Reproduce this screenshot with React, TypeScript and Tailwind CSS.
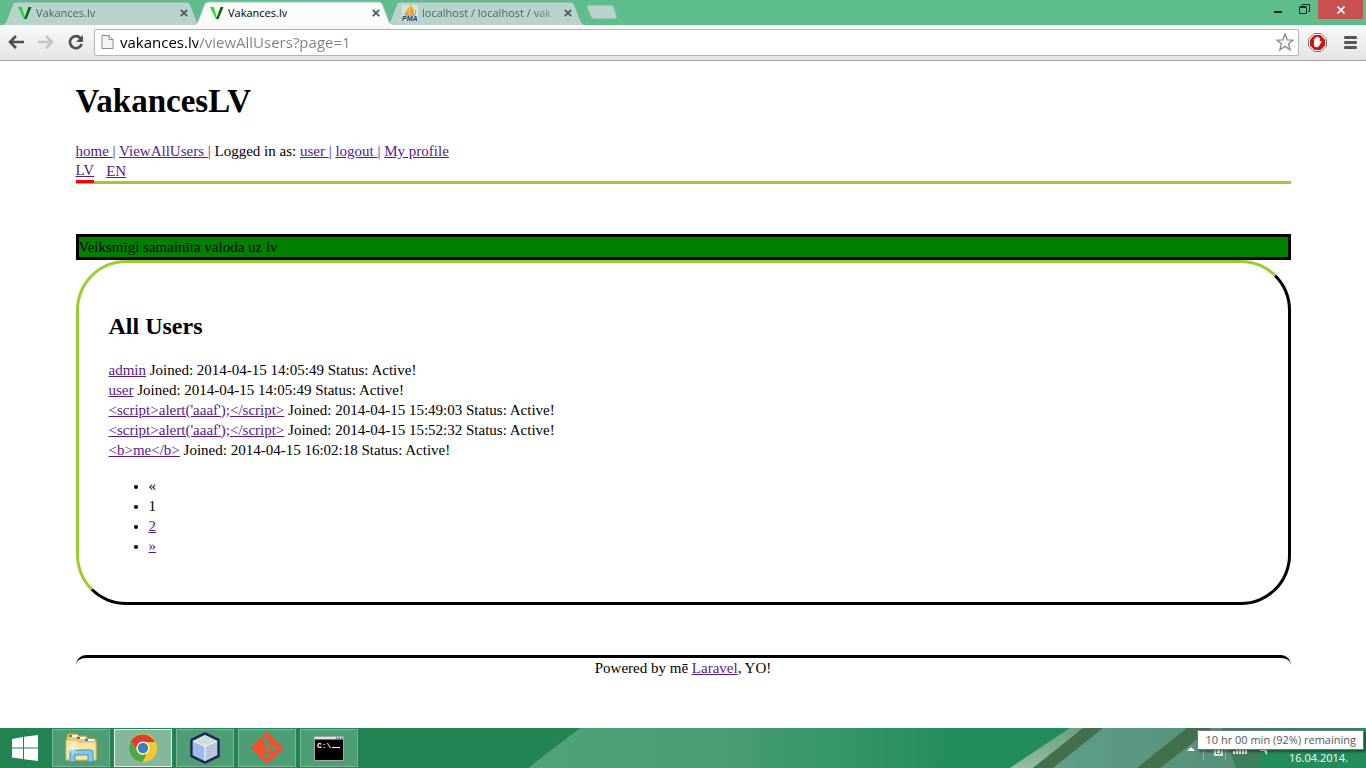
import type { ReactNode } from "react";

const link = "text-[#551a8b] underline";

const users = [
  { name: "admin", joined: "2014-04-15 14:05:49" },
  { name: "user", joined: "2014-04-15 14:05:49" },
  { name: "<script>alert('aaaf');</script>", joined: "2014-04-15 15:49:03" },
  { name: "<script>alert('aaaf');</script>", joined: "2014-04-15 15:52:32" },
  { name: "<b>me</b>", joined: "2014-04-15 16:02:18" },
];

function VIcon() {
  return (
    <svg width="14" height="14" viewBox="0 0 14 14" className="shrink-0">
      <path d="M0 1h3.500L7.500 13H6z" fill="#08e420" />
      <path d="M10.500 1H13.500L8.500 13H6.200z" fill="#04640c" />
    </svg>
  );
}

function PmaIcon() {
  return (
    <svg width="16" height="16" viewBox="0 0 16 16" className="shrink-0">
      <path d="M0 0h16v16H0z" fill="#d6e5dc" />
      <path d="M7 1v8H2C4 7 6 4 7 1zM8 0c3 2 4 6 4 9H8zM12 3c2 2 2 4 2 6h-1c0-2 0-4-1-6z" fill="#efa21b" />
      <path d="M2 9.500h12l-1 1H3z" fill="#a8763c" />
      <text x="0" y="16" fontSize="7" fontWeight="bold" fontStyle="italic" fontFamily="Liberation Sans, sans-serif" fill="#25305a">PMA</text>
    </svg>
  );
}

function Tab({ icon, title, active }: { icon: ReactNode; title: string; active?: boolean }) {
  return (
    <div className={active ? "relative z-10 -mr-2 h-6 w-[200px]" : "relative -mr-2 h-6 w-[200px]"}>
      <svg className="absolute inset-0 h-full w-full" viewBox="0 0 200 24" preserveAspectRatio="none">
        <path
          d="M0 24C3 23 4 21 5 18L10 5C11 2 12 1 15 1H184C187 1 188 2 189 5L194 18C195 21 196 23 200 24"
          fill={active ? "#fbfbfb" : "#b8d3cc"}
          stroke={active ? "#a4c6b6" : "#7da897"}
        />
      </svg>
      <div className="relative flex h-full items-center pl-4 pr-3.5">
        <button className="flex min-w-0 flex-1 items-center gap-1">
          {icon}
          <span
            className={
              active
                ? "overflow-hidden whitespace-nowrap text-black"
                : "overflow-hidden whitespace-nowrap bg-[linear-gradient(90deg,#46605a_112px,#9ab5ad_136px)] bg-clip-text text-transparent"
            }
          >
            {title}
          </span>
        </button>
        <button aria-label="Close tab" className="ml-2 shrink-0">
          <svg width="8" height="8" viewBox="0 0 8 8" stroke="#4b5c56" strokeWidth="1.800">
            <path d="M.8.8l6.400 6.400M7.200.8L.8 7.200" />
          </svg>
        </button>
      </div>
    </div>
  );
}

function Browser() {
  return (
    <header className="font-['Open_Sans','Noto_Sans',sans-serif] text-[11px]">
      <div className="flex h-[25px] items-start bg-[#5dbe8c] pl-0.5">
        <div className="flex pt-px">
          <Tab icon={<VIcon />} title="Vakances.lv" />
          <Tab icon={<VIcon />} title="Vakances.lv" active />
          <Tab icon={<PmaIcon />} title="localhost / localhost / vak" />
        </div>
        <button aria-label="New tab" className="ml-2 mt-1">
          <svg width="32" height="17" viewBox="0 0 32 17">
            <path d="M3 1h22q2 0 3 2l3 10q0 2-2 2H9q-3 0-4-2L1 4q-1-3 2-3z" fill="#b8d3cc" stroke="#81b39d" />
          </svg>
        </button>
        <div className="ml-auto flex">
          <button aria-label="Minimize" className="flex h-[19px] w-6 items-center justify-center">
            <svg width="8" height="8"><path d="M0 5h8v2H0z" fill="#1d2a24" /></svg>
          </button>
          <button aria-label="Restore" className="flex h-[19px] w-7 items-center justify-center">
            <svg width="11" height="11" fill="none" stroke="#1d2a24"><path d="M3 1.500V.5h7.500v7H9M.5 3.500h7v6h-7zM.5 2.500h7" /></svg>
          </button>
          <button aria-label="Close" className="mr-[3px] flex h-[19px] w-[45px] items-center justify-center bg-[#c75050]">
            <svg width="8" height="8" viewBox="0 0 8 8" stroke="#fff" strokeWidth="1.700"><path d="M.5.5l7 7M7.500.5l-7 7" /></svg>
          </button>
        </div>
      </div>
      <div className="flex h-9 items-center border-b border-[#a3a3a3] bg-linear-to-b from-[#fafafa] to-[#e4e4e4] pb-px pl-2 pr-[9px]">
        <button aria-label="Back" className="mr-3.5">
          <svg width="16" height="14" viewBox="0 0 16 14" fill="none" stroke="#505050" strokeWidth="2.600"><path d="M8 1L2 7l6 6M2 7h14" /></svg>
        </button>
        <button aria-label="Forward" className="mr-3.5">
          <svg width="16" height="14" viewBox="0 0 16 14" fill="none" stroke="#c4c4c4" strokeWidth="2.600"><path d="M8 1l6 6-6 6M14 7H0" /></svg>
        </button>
        <button aria-label="Reload" className="mr-2.5">
          <svg width="16" height="16" viewBox="0 0 16 16"><path d="M12.500 4.200A6 6 0 1 0 13.700 10" fill="none" stroke="#505050" strokeWidth="2.600" /><path d="M15 1v7H8z" fill="#505050" /></svg>
        </button>
        <div className="flex h-[27px] flex-1 items-center rounded-xs border border-[#b4b4b4] bg-white pl-1.5 pr-1">
          <svg width="13" height="16" viewBox="0 0 13 16" fill="#f4f4f4" stroke="#8d8d8d"><path d="M1 1.500h7l4 4v9H1zM8 1.500v4h4" /></svg>
          <input
            aria-label="Address"
            defaultValue="vakances.lv/viewAllUsers?page=1"
            className="ml-1.5 min-w-0 flex-1 bg-[linear-gradient(90deg,#000_78px,#808080_78px)] bg-clip-text text-[15px] leading-5 text-transparent outline-none"
          />
          <button aria-label="Bookmark">
            <svg width="18" height="18" viewBox="0 0 18 18"><path d="M9 1l2.200 5.800 6 .2-4.700 3.800 1.700 6L9 13.400l-5.200 3.400 1.700-6L.8 7l6-.2z" fill="#fff" stroke="#8a8a8a" strokeWidth="1.300" /></svg>
          </button>
        </div>
        <button aria-label="AdBlock" className="ml-[9px]">
          <svg width="19" height="19" viewBox="0 0 19 19">
            <path d="M6 .5h7L18.500 6v7L13 18.500H6L.5 13V6z" fill="#fff" stroke="#777" />
            <path d="M6.500 2h6L17 6.500v6L12.500 17h-6L2 12.500v-6z" fill="#d8100c" />
            <path d="M6 6q.7-1 1.400 0V4.500q.7-1 1.400 0V4q.8-1 1.600 0v1q.8-.8 1.400 0v4l1-1q1-.3 1 .5L11 13q-1 1.500-3 1.200Q6 14 6 12z" fill="#fff" />
          </svg>
        </button>
        <button aria-label="Menu" className="ml-[17px]">
          <svg width="13" height="13"><path d="M1 0h11q1 0 1 1.500T12 3H1Q0 3 0 1.500T1 0zM1 5h11q1 0 1 1.500T12 8H1Q0 8 0 6.500T1 5zM1 10h11q1 0 1 1.500T12 13H1q-1 0-1-1.500T1 10z" fill="#555" /></svg>
        </button>
      </div>
    </header>
  );
}

function TaskButton({ label, active, children }: { label: string; active?: boolean; children: ReactNode }) {
  return (
    <button
      aria-label={label}
      className={
        active
          ? "flex h-[38px] w-[58px] items-center justify-center border border-[#e2f0e8] bg-[#84b89c]"
          : "flex h-[38px] w-[58px] items-center justify-center border border-[#7ab597] bg-[#4d9e75]"
      }
    >
      {children}
    </button>
  );
}

function Taskbar() {
  return (
    <footer className="relative flex h-10 items-center bg-[#23895a] font-['Open_Sans','Noto_Sans',sans-serif]">
      <svg className="absolute inset-0 h-10 w-full" viewBox="0 0 1366 40" preserveAspectRatio="none">
        <defs>
          <linearGradient id="glow" x1="0" x2="1">
            <stop offset="0" stopColor="#4fa377" />
            <stop offset=".35" stopColor="#4a9e73" />
            <stop offset=".8" stopColor="#228d5b" />
            <stop offset="1" stopColor="#228d5b" />
          </linearGradient>
          <linearGradient id="glass" x1="0" x2="1">
            <stop offset="0" stopColor="#6fa68c" />
            <stop offset=".3" stopColor="#5c9c86" />
            <stop offset="1" stopColor="#578f78" />
          </linearGradient>
          <linearGradient id="edge" x1="0" x2="0" y1="0" y2="1">
            <stop offset="0" stopColor="#6d9e80" />
            <stop offset="1" stopColor="#93bda4" />
          </linearGradient>
        </defs>
        <path d="M0 0h1366v40H0z" fill="#238353" />
        <path d="M580 0h480l-40 40H528z" fill="url(#glow)" />
        <path d="M1000 0h366v40h-366z" fill="#228d5b" />
        <path d="M1070 0h155l11 40h-226z" fill="url(#glass)" />
        <path d="M1070 0h13l-50 40h-23z" fill="url(#edge)" />
        <path d="M1083 0h20l-50 40h-20zM1187 0h25l-52 40h-23z" fill="#42704a" />
        <path d="M1222 0h38v40h-24z" fill="#3d7f5c" />
      </svg>
      <div className="relative flex items-center gap-1">
        <button aria-label="Start" className="flex h-10 w-12 items-center justify-center pl-0.5">
          <svg width="26" height="26" viewBox="0 0 26 26" fill="#fff"><path d="M0 4l11-2v10.500H0zM12 1.800L26 0v12.500H12zM0 13.500h11V24L0 22.500zM12 13.500h14V26l-14-1.800z" /></svg>
        </button>
        <TaskButton label="File Explorer">
          <svg width="34" height="30" viewBox="0 0 34 30">
            <path d="M3 3q0-2 2-2h8l2 2h7l2 3h8v21H3z" fill="#e9cf7d" stroke="#c4a04e" />
            <path d="M5 2h8v2H5zM13 4h8v2h-8zM21 6h9v2h-9z" fill="#fff" />
            <path d="M5 2h3v2H5z" fill="#2da23a" /><path d="M13 4h3v2h-3z" fill="#d9482b" /><path d="M21 6h3v2h-3z" fill="#2b83c8" />
            <path d="M2 7h11l2 2h17v18H2z" fill="#f8e6a2" stroke="#d6b769" />
            <path d="M6 29V19q0-2 2-2h19q2 0 2 2v10h-5v-7H11v7z" fill="#83c6e9" stroke="#3e91bf" />
            <path d="M9 10v12M3 16h12M5 12l8 8M13 12l-8 8" stroke="#fff" strokeOpacity=".7" />
          </svg>
        </TaskButton>
        <TaskButton label="Chrome" active>
          <svg width="28" height="28" viewBox="0 0 28 28">
            <circle cx="14" cy="14" r="14" fill="#f9c62e" />
            <path d="M1.900 7A14 14 0 0 1 26.100 8H14a7 7 0 0 0-6.100 9.500z" fill="#dc3d2e" />
            <path d="M1.900 7l6 10.500A7 7 0 0 0 17.500 20L13.500 28A14 14 0 0 1 1.900 7z" fill="#4aa847" />
            <circle cx="14" cy="14" r="6.500" fill="#fff" /><circle cx="14" cy="14" r="5.200" fill="#397fc4" />
          </svg>
        </TaskButton>
        <TaskButton label="VirtualBox">
          <svg width="30" height="32" viewBox="0 0 30 32" strokeLinejoin="round">
            <path d="M15 1.500L28.500 8v16L15 30.500 1.500 24V8z" fill="#e4edf9" stroke="#1d2856" strokeWidth="2.500" />
            <path d="M3 9l12 5.500V29L3 23z" fill="#9dbbea" /><path d="M27 9l-12 5.500V29l12-6z" fill="#b8c6d8" /><path d="M15 3l12 6-12 5.500L3 9z" fill="#cbe0d7" />
            <path d="M15 14.500V29M3 9l12 5.500L27 9" fill="none" stroke="#f4f8fd" />
          </svg>
        </TaskButton>
        <TaskButton label="Git">
          <svg width="32" height="32" viewBox="0 0 32 32">
            <path d="M16 1L31 16 16 31 1 16z" fill="#f0512f" stroke="#f0512f" strokeWidth="2" strokeLinejoin="round" />
            <path d="M11 5l5 5v14M16 11l6 6" fill="none" stroke="#4d9e75" strokeWidth="2" />
            <circle cx="16" cy="10.500" r="2.500" fill="#4d9e75" /><circle cx="22" cy="17" r="2.500" fill="#4d9e75" /><circle cx="16" cy="23" r="2.500" fill="#4d9e75" />
          </svg>
        </TaskButton>
        <TaskButton label="Command Prompt">
          <svg width="30" height="25" viewBox="0 0 30 25">
            <path d="M.5.5h29v24H.5z" fill="#000" stroke="#9ba8a4" /><path d="M1 1h28v2.500H1z" fill="#d9e1ea" />
            <path d="M22 1.500h1.500V3H22zM24.500 1.500H26V3h-1.500zM27 1.500h1.500V3H27z" fill="#3e67b0" />
            <text x="3" y="12" fontSize="8" fontFamily="Liberation Mono, monospace" fontWeight="bold" fill="#fff">C:\</text>
            <path d="M18 11.500h8" stroke="#fff" />
          </svg>
        </TaskButton>
      </div>
      <div className="relative ml-auto flex h-full items-end pb-1 pr-[18px] text-white">
        <svg width="102" height="16" viewBox="0 0 102 16" className="mb-1">
          <path d="M0 7l4-4 4 4z" fill="#fff" />
          <path d="M16.500 0v16M38.500 0v16" stroke="#8cb4a1" />
          <path d="M28 2h7v9h-7z" fill="none" stroke="#fff" strokeWidth="1.500" /><path d="M30 4h3v5h-3z" fill="#fff" />
          <path d="M46 7h2v3h-2zM49 6h2v4h-2zM52 4h2v6h-2zM55 2h2v8h-2zM58 0h2v10h-2z" fill="#fff" />
          <path d="M73 4h4l3-4v11l-3-4h-4z" fill="#fff" />
        </svg>
        <span className="text-[11px] leading-3">16.04.2014.</span>
      </div>
      <div role="tooltip" className="absolute right-[2px] top-[2px] flex h-5 items-center whitespace-nowrap border border-[#767676] bg-white px-[7px] text-[11px] text-[#575757] shadow-[2px_2px_2px_rgba(0,0,0,0.4)]">
        10 hr 00 min (92%) remaining
      </div>
    </footer>
  );
}

export default function App() {
  return (
    <div className="flex min-h-screen flex-col bg-white">
      <Browser />
      <div className="flex-1 px-2 font-['Liberation_Serif',serif] text-[15px] leading-5 text-black">
        <div className="mx-auto w-[90%]">
          <div className="border-b-3 border-[#9acd32] pt-5">
            <h1 className="mb-5 text-[33px] font-bold leading-10">VakancesLV</h1>
            <nav className="text-[#551a8b]">
              <a href="#home" className={link}>home </a>| <a href="#users" className={link}>ViewAllUsers </a>| <span className="text-black">Logged in as: </span>
              <a href="#user" className={link}>user </a>| <a href="#logout" className={link}>logout </a>| <a href="#profile" className={link}>My profile</a>
            </nav>
            <div className="-mb-0.5 flex items-start gap-3">
              <a href="#lv" className="border-b-3 border-[#ff0000] leading-[19px] text-[#551a8b] underline">LV</a>
              <a href="#en" className={link}>EN</a>
            </div>
          </div>
          <main className="mt-[50px]">
            <p className="border-3 border-black bg-[#008000]">Veiksmīgi samainīta valoda uz lv</p>
            <section className="rounded-[50px] border-3 border-t-[#9acd32] border-r-black border-b-black border-l-[#9acd32] px-[30px] pb-[46px] pt-[49px]">
              <h2 className="mb-5 text-2xl font-bold leading-7">All Users</h2>
              {users.map((u, i) => (
                <p key={i}>
                  <a href={`#user-${i}`} className={link}>{u.name}</a> Joined: {u.joined} Status: Active!
                </p>
              ))}
              <ul className="mt-4 list-disc pl-10">
                <li>«</li>
                <li>1</li>
                <li><a href="#page-2" className={link}>2</a></li>
                <li><a href="#next" className={link}>»</a></li>
              </ul>
            </section>
          </main>
          <div className="mb-6 mt-[50px] rounded-t-[10px] border-t-3 border-black text-center">
            Powered by mē <a href="#laravel" className={link}>Laravel</a>, YO!
          </div>
        </div>
      </div>
      <Taskbar />
    </div>
  );
}
